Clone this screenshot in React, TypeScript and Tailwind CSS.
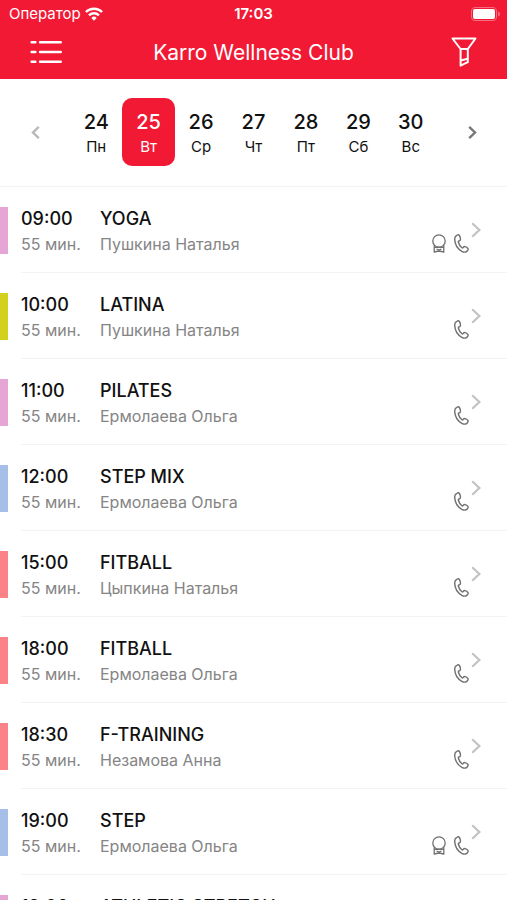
import React from "react";

type Lesson = {
  time: string;
  title: string;
  trainer: string;
  bar: string;
  medal?: boolean;
};

const days = [
  { num: 24, name: "Пн" },
  { num: 25, name: "Вт" },
  { num: 26, name: "Ср" },
  { num: 27, name: "Чт" },
  { num: 28, name: "Пт" },
  { num: 29, name: "Сб" },
  { num: 30, name: "Вс" },
];

const lessons: Lesson[] = [
  { time: "09:00", title: "YOGA", trainer: "Пушкина Наталья", bar: "bg-[#e6a6d5]", medal: true },
  { time: "10:00", title: "LATINA", trainer: "Пушкина Наталья", bar: "bg-[#d2d21e]" },
  { time: "11:00", title: "PILATES", trainer: "Ермолаева Ольга", bar: "bg-[#e6a6d5]" },
  { time: "12:00", title: "STEP MIX", trainer: "Ермолаева Ольга", bar: "bg-[#a6bfe8]" },
  { time: "15:00", title: "FITBALL", trainer: "Цыпкина Наталья", bar: "bg-[#fb8388]" },
  { time: "18:00", title: "FITBALL", trainer: "Ермолаева Ольга", bar: "bg-[#fb8388]" },
  { time: "18:30", title: "F-TRAINING", trainer: "Незамова Анна", bar: "bg-[#fb8388]" },
  { time: "19:00", title: "STEP", trainer: "Ермолаева Ольга", bar: "bg-[#a6bfe8]", medal: true },
  { time: "19:00", title: "ATHLETIC STRETCH", trainer: "Незамова Анна", bar: "bg-[#e6a6d5]" },
];

function WifiIcon() {
  return (
    <svg width="18" height="14" viewBox="0 0 18 14" fill="none" stroke="white" strokeWidth="2.4" aria-hidden="true">
      <path d="M0.9 5a11.6 11.6 0 0 1 16.2 0" />
      <path d="M4 8.3a7.2 7.2 0 0 1 10 0" />
      <path d="M9 13.8l-2.7-2.9a3.8 3.8 0 0 1 5.4 0z" fill="white" stroke="none" />
    </svg>
  );
}

function BatteryIcon() {
  return (
    <svg width="30" height="14" viewBox="0 0 30 14" aria-hidden="true">
      <rect x="0.5" y="0.5" width="25" height="13" rx="3.5" fill="none" stroke="#f76d7f" />
      <rect x="2" y="2" width="22" height="10" rx="2" fill="white" />
      <path d="M27 4.5c1.4.4 2 1.4 2 2.5s-.6 2.1-2 2.5z" fill="#f76d7f" />
    </svg>
  );
}

function MenuIcon() {
  return (
    <svg width="32" height="24" viewBox="0 0 32 24" stroke="white" strokeWidth="2.4" strokeLinecap="round" aria-hidden="true">
      <path d="M1.6 2.2h3.8M10 2.2h20.8M1.6 12h3.8M10 12h20.8M1.6 21.8h3.8M10 21.8h20.8" />
    </svg>
  );
}

function FilterIcon() {
  return (
    <svg width="26" height="30" viewBox="0 0 26 30" fill="none" stroke="white" strokeWidth="2" strokeLinejoin="round" aria-hidden="true">
      <path d="M1.5 1.500h23L16.800 12v13.200L9.600 28.600V12z" />
      <path d="M9.600 12h7.200M9.600 23.400l7.200-1.600" />
    </svg>
  );
}

function DayArrow({ next = false }: { next?: boolean }) {
  return (
    <svg width="9" height="13" viewBox="0 0 9 13" fill="none" stroke={next ? "#777777" : "#b8b8b8"} strokeWidth="2.4" aria-hidden="true">
      <path d={next ? "M1.2 0.9L7 6.5L1.2 12.1" : "M7.8 0.9L2 6.5L7.8 12.1"} />
    </svg>
  );
}

function MedalIcon() {
  return (
    <svg width="14" height="19" viewBox="0 0 14 19" fill="none" stroke="#707070" strokeWidth="1.3" strokeLinejoin="round" aria-hidden="true">
      <circle cx="7" cy="7" r="6.2" />
      <path d="M2.2 11.200v6.800L7 17l4.800 1v-6.800M2.200 13.300h9.600M4.600 15.200l2.400.8 2.400-.8" />
    </svg>
  );
}

function PhoneIcon() {
  return (
    <svg width="15" height="19" viewBox="0 0 15 19" fill="none" stroke="#707070" strokeWidth="1.4" strokeLinejoin="round" aria-hidden="true">
      <path d="M3.200 1.100C1.500 1.800.6 3.400.7 5.400c.2 4.800 3.100 9.600 7.200 12 1.800 1 3.800.9 5.200-.3.900-.8 1.300-1.700.9-2.400-.6-1-2-1.900-3-2.100-.9-.2-1.400.3-1.900 1-.4.5-.9.500-1.400 0C6 12 4.900 10 4.400 8.200c-.2-.7 0-1 .6-1.200.9-.3 1.500-.7 1.500-1.600 0-1.200-.4-2.900-1.100-3.900-.6-.8-1.400-.8-2.200-.4z" />
    </svg>
  );
}

function RowArrow() {
  return (
    <svg width="10" height="16" viewBox="0 0 10 16" fill="none" stroke="#c2c2c2" strokeWidth="2.2" aria-hidden="true">
      <path d="M1.2 1.2L8.4 8L1.2 14.8" />
    </svg>
  );
}

export default function App() {
  return (
    <div className="flex h-screen flex-col overflow-hidden bg-white font-['Inter','Noto_Sans',sans-serif] text-[#111111]">
      <header className="bg-[#f21935] text-white">
        <div className="grid h-7 grid-cols-3 items-center px-1.5">
          <div className="flex items-center gap-1 pl-[3px] text-[15px]">
            <span>Оператор</span>
            <WifiIcon />
          </div>
          <span className="text-center text-[15px] font-semibold">17:03</span>
          <div className="flex justify-end">
            <BatteryIcon />
          </div>
        </div>
        <div className="flex h-[51px] items-center justify-between px-[30px] pb-1">
          <button type="button" className="w-8" aria-label="Меню">
            <MenuIcon />
          </button>
          <h1 className="pt-0.5 text-[21px] leading-7">Karro Wellness Club</h1>
          <button type="button" className="flex w-8 justify-end" aria-label="Фильтр">
            <FilterIcon />
          </button>
        </div>
      </header>

      <nav className="flex items-center border-b border-[#f3f3f3] pt-[19px] pb-5" aria-label="Дни">
        <button type="button" className="flex w-[70px] justify-center pt-px" aria-label="Назад">
          <DayArrow />
        </button>
        <div className="grid flex-1 grid-cols-7">
          {days.map((day) => (
            <button
              key={day.num}
              type="button"
              className={
                day.num === 25
                  ? "flex h-[68px] flex-col items-center rounded-[10px] bg-[#f21935] pt-[11px] text-white"
                  : "flex h-[68px] flex-col items-center pt-[11px]"
              }
            >
              <span className="text-xl leading-[26px] font-medium">{day.num}</span>
              <span className="text-[15px] leading-6">{day.name}</span>
            </button>
          ))}
        </div>
        <button type="button" className="flex w-[70px] justify-center pt-px" aria-label="Вперёд">
          <DayArrow next />
        </button>
      </nav>

      <ul className="min-h-0 flex-1 overflow-hidden">
        {lessons.map((lesson, index) => (
          <li key={index}>
            <a href="#" className="flex h-[86px]">
              <span className={`mt-5 mr-[13px] h-[47px] w-2 ${lesson.bar}`} />
              <div className="flex flex-1 border-b border-[#f3f3f3] pt-[18px] pr-[26px]">
                <div className="w-[79px]">
                  <p className="text-lg leading-7 font-medium">{lesson.time}</p>
                  <p className="text-base leading-[22px] text-[#858585]">55 мин.</p>
                </div>
                <div className="flex-1">
                  <p className="text-lg leading-7 font-medium">{lesson.title}</p>
                  <p className="text-base leading-[22px] text-[#858585]">{lesson.trainer}</p>
                </div>
                <div className="flex gap-2 pt-[29px]">
                  {lesson.medal && <MedalIcon />}
                  <PhoneIcon />
                </div>
                <div className="ml-0.5 pt-[17px]">
                  <RowArrow />
                </div>
              </div>
            </a>
          </li>
        ))}
      </ul>
    </div>
  );
}
